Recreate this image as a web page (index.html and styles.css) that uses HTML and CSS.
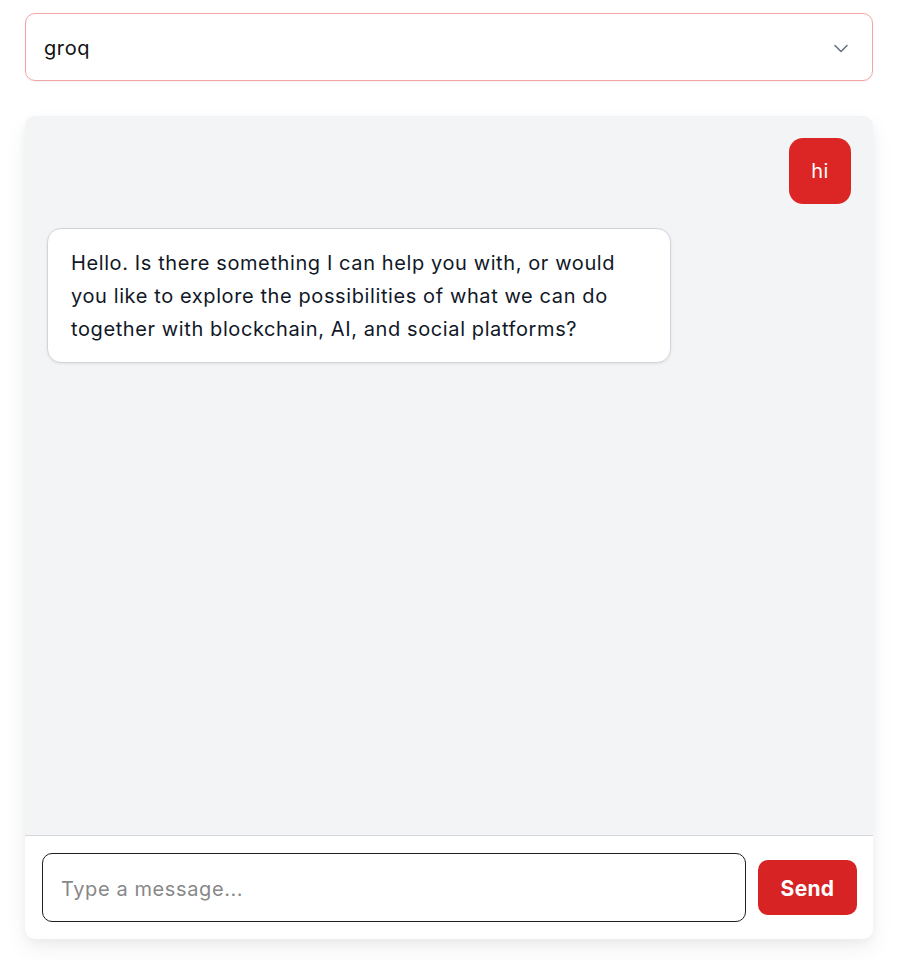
FILE: index.html
```html
<!DOCTYPE html>
<html lang="en">
<head>
<meta charset="utf-8">
<title>Chat</title>
<link rel="stylesheet" href="styles.css">
</head>
<body>
<div class="page">
  <div class="select">
    <span class="select-value">groq</span>
    <svg class="chevron" width="20" height="20" viewBox="0 0 20 20" fill="none" stroke="#6b7280" stroke-width="1.6" stroke-linecap="round" stroke-linejoin="round"><path d="M4 7.5l6 6 6-6"/></svg>
  </div>
  <div class="chat">
    <div class="messages">
      <div class="msg user">hi</div>
      <div class="msg bot">Hello. Is there something I can help you with, or would you like to explore the possibilities of what we can do together with blockchain, AI, and social platforms?</div>
    </div>
    <div class="composer">
      <div class="input">Type a message...</div>
      <button class="send">Send</button>
    </div>
  </div>
</div>
</body>
</html>
```
FILE: styles.css
```css
* { box-sizing: border-box; }
html, body { margin: 0; background: #ffffff; }
body {
  font-family: Inter, "Noto Sans", "Liberation Sans", sans-serif;
  color: #111827;
  letter-spacing: 0.6px;
}
.page {
  padding: 13px 26px 21px 25px;
  display: flex;
  flex-direction: column;
  gap: 35px;
}
.select {
  height: 68px;
  border: 1.5px solid #f3a5a5;
  border-radius: 10px;
  display: flex;
  align-items: center;
  justify-content: space-between;
  padding: 2px 21px 0 18px;
  font-size: 20px;
  color: #111;
  box-shadow: 0 1px 2px rgba(0,0,0,0.05);
}
.chevron { display: block; }
.chat {
  height: 823px;
  background: #f3f4f6;
  border-radius: 10px;
  overflow: hidden;
  display: flex;
  flex-direction: column;
  box-shadow: 0 10px 25px rgba(0,0,0,0.06), 0 4px 10px rgba(0,0,0,0.04);
}
.messages {
  flex: 1;
  padding: 22px 22px;
  display: flex;
  flex-direction: column;
  gap: 24px;
  border-bottom: 1px solid #d5d7de;
}
.msg {
  font-size: 20px;
  line-height: 33px;
  border-radius: 14px;
}
.user {
  align-self: flex-end;
  background: #dc2626;
  color: #fff;
  padding: 17px 22px 16px;
}
.bot {
  align-self: flex-start;
  background: #fff;
  border: 1px solid #d1d5db;
  padding: 18px 23px 16px;
  width: 624px;
  box-shadow: 0 1px 3px rgba(0,0,0,0.08);
  color: #111827;
}
.composer {
  background: #fff;
  padding: 17px 16px 17px 17px;
  display: flex;
  align-items: center;
  gap: 12px;
}
.input {
  flex: 1;
  height: 69px;
  border: 1.5px solid #1f1f1f;
  border-radius: 10px;
  padding: 2px 18px 0;
  display: flex;
  align-items: center;
  font-size: 20px;
  color: #888;
}
.send {
  width: 99px;
  height: 55px;
  border: none;
  border-radius: 10px;
  background: #d72323;
  color: #fff;
  font-family: inherit;
  font-size: 21px;
  font-weight: 700;
  letter-spacing: 0.3px;
  padding-top: 2px;
}
```
